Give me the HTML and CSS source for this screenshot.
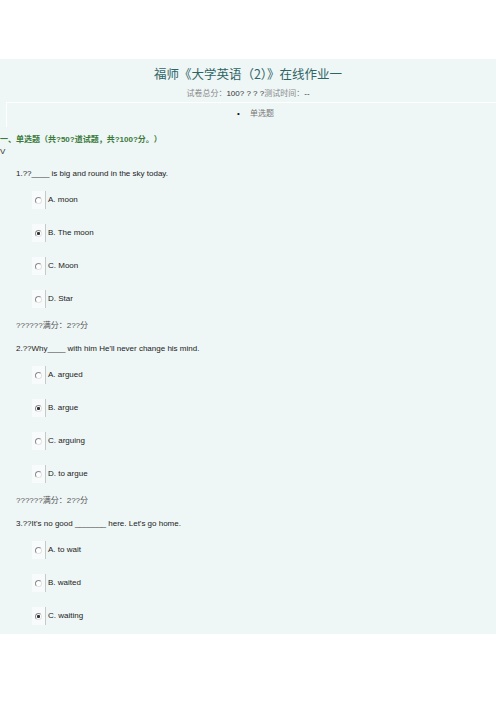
FILE: index.html
```html
<!DOCTYPE html>
<html lang="zh-CN">
<head>
    <meta charset="UTF-8">
    <meta name="viewport" content="width=device-width, initial-scale=1.0">
    <title>福师《大学英语（2）》在线作业一</title>
    <link rel="stylesheet" href="styles.css">
</head>
<body>
    <div class="paper">
        <h1 class="title">福师《大学英语（2）》在线作业一</h1>
        <p class="meta">试卷总分：<span class="num">100? ? ? ?</span>测试时间：<span class="num">--</span></p>
        <div class="tabs">
            <ul>
                <li><span class="dot">&bull;</span>单选题</li>
            </ul>
        </div>

        <h2 class="section">一、单选题（共?50?道试题，共?100?分。）</h2>
        <div class="mark">V</div>

        <div class="question">
            <p class="q-title">1.??____ is big and round in the sky today.</p>
            <ul class="options">
                <li><span class="radio"></span><span class="label">A. moon</span></li>
                <li><span class="radio checked"></span><span class="label">B. The moon</span></li>
                <li><span class="radio"></span><span class="label">C. Moon</span></li>
                <li><span class="radio"></span><span class="label">D. Star</span></li>
            </ul>
            <p class="score">??????满分：2??分</p>
        </div>

        <div class="question">
            <p class="q-title">2.??Why____ with him He'll never change his mind.</p>
            <ul class="options">
                <li><span class="radio"></span><span class="label">A. argued</span></li>
                <li><span class="radio checked"></span><span class="label">B. argue</span></li>
                <li><span class="radio"></span><span class="label">C. arguing</span></li>
                <li><span class="radio"></span><span class="label">D. to argue</span></li>
            </ul>
            <p class="score">??????满分：2??分</p>
        </div>

        <div class="question last">
            <p class="q-title">3.??It's no good _______ here. Let's go home.</p>
            <ul class="options">
                <li><span class="radio"></span><span class="label">A. to wait</span></li>
                <li><span class="radio"></span><span class="label">B. waited</span></li>
                <li><span class="radio checked"></span><span class="label">C. waiting</span></li>
            </ul>
        </div>
    </div>
</body>
</html>
```

FILE: styles.css
```css
html, body {
    margin: 0;
    padding: 0;
    background-color: #FFFFFF;
}
body {
    font-family: "Liberation Sans", Arial, "Noto Sans CJK SC", sans-serif;
    font-size: 8px;
    color: #222;
}
.paper {
    margin-top: 59px;
    background-color: #eef6f6;
    padding: 5px 0 9px 0;
}
.title {
    margin: 0;
    font-family: "Noto Sans CJK SC", sans-serif;
    font-size: 12.5px;
    line-height: 20px;
    font-weight: normal;
    text-align: center;
    color: #2f6464;
}
.meta {
    margin: 4px 0 0 0;
    line-height: 12px;
    text-align: center;
    color: #888;
}
.meta .num {
    color: #333;
}
.tabs {
    margin: 2px 0 0 6px;
    border-top: 1px solid #ffffff;
    border-left: 1px solid #ffffff;
    height: 24px;
}
.tabs ul {
    margin: 0;
    padding: 0;
    list-style: none;
    text-align: center;
}
.tabs li {
    display: inline-block;
    line-height: 22px;
    color: #777;
    padding-left: 8px;
}
.tabs .dot {
    color: #111;
    margin-right: 10px;
}
.section {
    margin: 7px 0 0 0;
    font-size: 8px;
    line-height: 12px;
    font-weight: bold;
    color: #3b7a3b;
}
.mark {
    line-height: 11px;
    color: #333;
}
.question {
    padding-left: 16px;
}
.q-title {
    margin: 11px 0 0 0;
    line-height: 12px;
}
.options {
    margin: 11px 0 0 0;
    padding: 0 0 0 16px;
    list-style: none;
}
.options li {
    display: flex;
    align-items: center;
    height: 18px;
    margin-bottom: 15px;
}
.options li:last-child {
    margin-bottom: 0;
}
.radio {
    width: 13px;
    height: 18px;
    background-color: #f7fbfb;
    display: flex;
    align-items: center;
    justify-content: center;
}
.radio::before {
    content: "";
    width: 5px;
    height: 5px;
    border-radius: 50%;
    border: 1px solid;
    border-color: #8a8a8a #e2e2e2 #e2e2e2 #8a8a8a;
    background-color: #fff;
}
.radio.checked::before {
    background: radial-gradient(circle, #333 0, #333 1.3px, #fff 1.8px);
}
.label {
    border-left: 1px solid #c8c8c8;
    padding-left: 2px;
    line-height: 18px;
    color: #222;
}
.score {
    margin: 12px 0 0 0;
    line-height: 12px;
    color: #555;
}
```
